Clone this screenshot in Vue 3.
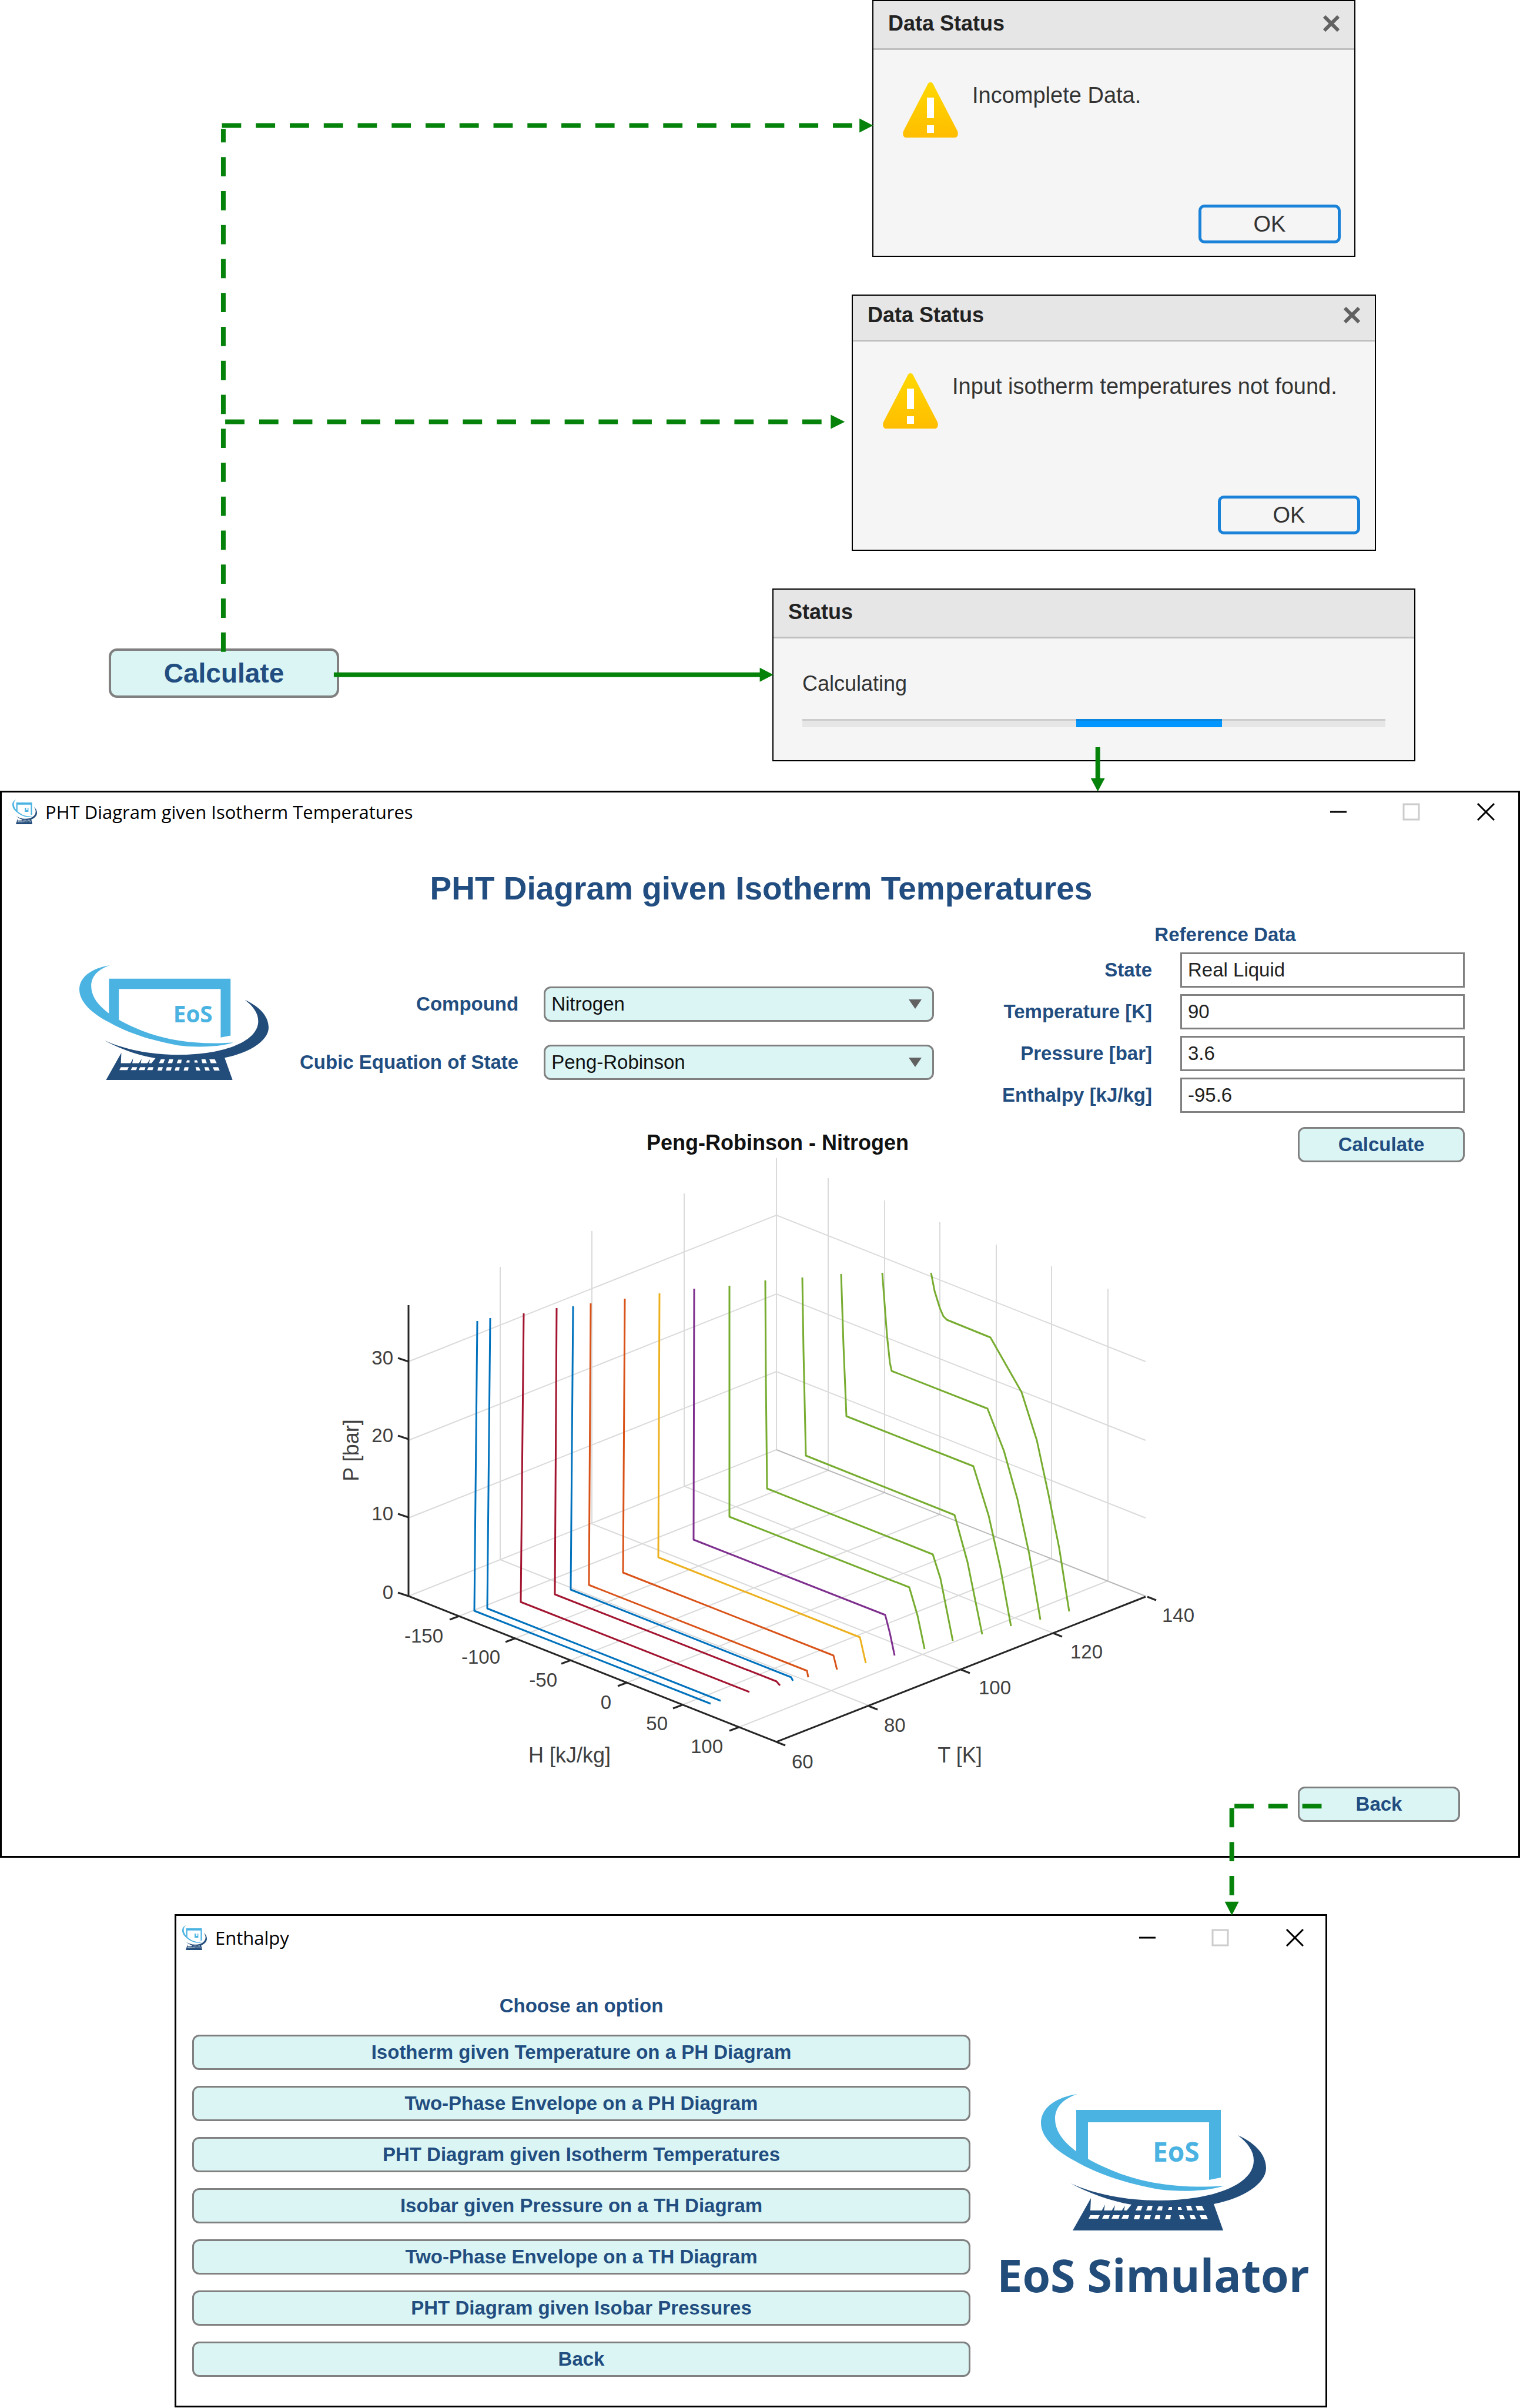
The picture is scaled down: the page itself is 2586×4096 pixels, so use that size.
<script setup>
import { ref } from 'vue'

const compound = ref('Nitrogen')
const equation = ref('Peng-Robinson')

const reference = ref([
  { id: 'state', label: 'State', value: 'Real Liquid' },
  { id: 'temperature', label: 'Temperature [K]', value: '90' },
  { id: 'pressure', label: 'Pressure [bar]', value: '3.6' },
  { id: 'enthalpy', label: 'Enthalpy [kJ/kg]', value: '-95.6' },
])

const options = [
  'Isotherm given Temperature on a PH Diagram',
  'Two-Phase Envelope on a PH Diagram',
  'PHT Diagram given Isotherm Temperatures',
  'Isobar given Pressure on a TH Diagram',
  'Two-Phase Envelope on a TH Diagram',
  'PHT Diagram given Isobar Pressures',
  'Back',
]

// Back corner of the box is (762, 508); walls rise 496 units above the floor.
const pressureGrid = [109, 243, 375].map((y) => `136,${y + 249} 762,${y} 1390,${y + 249}`)
const enthalpyGrid = [
  [222, 791, 850, 543],
  [317, 829, 946, 581],
  [412, 866, 1040, 618],
  [508, 904, 1136, 656],
  [602, 942, 1230, 693],
  [698, 980, 1326, 731],
].map(([x, y, bx, by]) => `${x},${y} ${bx},${by} ${bx},${by - 497}`)
const temperatureGrid = [
  [919, 943, 292, 695],
  [1076, 882, 448, 634],
  [1233, 820, 605, 570],
].map(([x, y, bx, by]) => `${x},${y} ${bx},${by} ${bx},${by - 498}`)

const pTicks = [
  { t: '30', y: 358 },
  { t: '20', y: 490 },
  { t: '10', y: 623 },
  { t: '0', y: 757 },
]
const hTicks = [
  { t: '-150', x: 222, y: 791, lx: 193, ly: 836 },
  { t: '-100', x: 317, y: 829, lx: 290, ly: 872 },
  { t: '-50', x: 412, y: 866, lx: 387, ly: 911 },
  { t: '0', x: 508, y: 904, lx: 479, ly: 949 },
  { t: '50', x: 602, y: 942, lx: 575, ly: 985 },
  { t: '100', x: 698, y: 980, lx: 669, ly: 1024 },
]
const tTicks = [
  { t: '60', x: 762, y: 1005, lx: 788, ly: 1050 },
  { t: '80', x: 919, y: 944, lx: 945, ly: 988 },
  { t: '100', x: 1076, y: 882, lx: 1106, ly: 924 },
  { t: '120', x: 1233, y: 820, lx: 1262, ly: 863 },
  { t: '140', x: 1393, y: 758, lx: 1418, ly: 801 },
]

const blue = '#0072bd'
const red = '#a2142f'
const orange = '#d95319'
const green = '#77ac30'
const isotherms = [
  { c: blue, p: '253,289 248,782 650,940' },
  { c: blue, p: '275,284 270,778 667,935' },
  { c: red, p: '332,276 327,767 716,920' },
  { c: red, p: '388,267 385,754 762,902 768,909' },
  { c: blue, p: '416,264 412,746 787,895 790,901' },
  { c: orange, p: '446,259 443,738 814,884 816,895' },
  { c: orange, p: '504,251 501,717 859,858 865,882' },
  { c: '#edb120', p: '563,242 561,691 904,827 914,871' },
  { c: '#7e2f8e', p: '622,234 621,661 947,789 955,820 963,858' },
  { c: green, p: '682,229 682,622 988,742 1002,790 1014,847' },
  { c: green, p: '743,220 744,390 746,574 1028,686 1041,727 1062,833' },
  { c: green, p: '806,215 808,340 812,518 1065,619 1087,699 1112,822' },
  { c: green, p: '872,209 876,330 881,451 1097,536 1123,620 1143,709 1161,808' },
  { c: green, p: '942,207 950,313 955,360 958,374 1121,438 1149,510 1172,592 1192,685 1211,797' },
  { c: green, p: '1025,207 1031,238 1040,267 1046,281 1052,287 1126,317 1179,410 1205,492 1225,585 1243,675 1260,783' },
]
</script>

<template>
  <main class="page">
    <svg class="defs" aria-hidden="true">
      <defs>
        <linearGradient id="amber" x1="0" y1="0" x2="0" y2="1">
          <stop offset="0" stop-color="#ffd800" />
          <stop offset="1" stop-color="#ffbd00" />
        </linearGradient>
        <symbol id="warning" viewBox="0 0 94 94" overflow="visible">
          <path d="M47 0C50 0 51 2 52 4L93 83C95 89 93 94 88 94H6C1 94-1 89 1 83L42 4C43 2 44 0 47 0Z" fill="url(#amber)" />
          <path d="M41 26H53V61H41ZM41 73H53V86H41Z" fill="#fff" />
        </symbol>
        <symbol id="cross" viewBox="0 0 28 28" overflow="visible">
          <path d="M2 2L26 26M26 2L2 26" stroke="#616161" stroke-width="6" />
        </symbol>
        <symbol id="mark" viewBox="0 0 383 232" preserveAspectRatio="none">
          <path d="M62 0C28 5 0 22 0 49C0 75 28 99 60 115C100 138 150 153 200 162C240 167 285 165 312 156C230 162 165 150 112 126C66 106 24 78 24 42C24 22 38 8 62 0Z" fill="#4bb3e2" />
          <path d="M60 100V27H306V142L286 146V48H80V114Z" fill="#4bb3e2" />
          <path d="M335 70C366 84 383 104 383 126C383 152 345 177 294 187L310 232H54L85 177L84 198H146L154 188C118 182 80 168 51 152C90 170 145 181 200 181C290 181 362 155 362 113C362 97 352 83 335 70Z" fill="#224c7a" />
          <path d="M103 199L109 188L107 199ZM120 199L126 189L124 199ZM137 199L143 190L141 199Z" fill="#224c7a" />
          <path
            d="M161 198L165 190H173L170 198ZM179 198L182 190H190L188 198ZM197 198L200 191H207L206 198ZM216 197L218 192H223L223 197ZM233 197V192H238L240 197ZM249 198L247 190H255L258 198ZM266 198L263 190H274L278 198ZM81 212L84 206H100L97 212ZM104 212L107 206H117L115 212ZM120 212L123 206H134L132 212ZM137 212L140 206H150L148 212ZM158 213L160 206H169L167 213ZM175 213L177 206H187L185 213ZM193 213L195 206H203L202 213ZM211 213L213 206H221L220 213ZM237 213L235 206H242L245 213ZM255 213L253 206H261L264 213ZM273 213L270 206H281L284 213Z"
            fill="#fff"
          />
        </symbol>
        <symbol id="win-controls" viewBox="0 0 280 30" overflow="visible">
          <path d="M0 15H28" stroke="#000" stroke-width="3" />
          <rect x="125" y="2" width="26" height="26" fill="none" stroke="#ccc" stroke-width="3" />
          <path d="M251 1L279 29M279 1L251 29" stroke="#000" stroke-width="3" />
        </symbol>
      </defs>
    </svg>

    <section class="branches">
      <button class="btn start" type="button">Calculate</button>
      <div class="dialogs">
        <section class="dialog incomplete">
          <header>
            <h2>Data Status</h2>
            <svg class="cross"><use href="#cross" /></svg>
          </header>
          <div class="dialog-body">
            <div class="message">
              <svg class="warning"><use href="#warning" /></svg>
              <p>Incomplete Data.</p>
            </div>
            <button class="ok" type="button">OK</button>
          </div>
        </section>

        <section class="dialog missing">
          <header>
            <h2>Data Status</h2>
            <svg class="cross"><use href="#cross" /></svg>
          </header>
          <div class="dialog-body">
            <div class="message">
              <svg class="warning"><use href="#warning" /></svg>
              <p>Input isotherm temperatures not found.</p>
            </div>
            <button class="ok" type="button">OK</button>
          </div>
        </section>

        <section class="dialog status">
          <header><h2>Status</h2></header>
          <div class="status-body">
            <p>Calculating</p>
            <div class="track"><div class="bar"></div></div>
          </div>
        </section>
      </div>
    </section>

    <section class="window">
      <header class="titlebar">
        <svg class="app-icon" viewBox="0 0 383 232" preserveAspectRatio="none">
          <use href="#mark" width="383" height="232" />
          <path d="M192 78H214V100H236V78H250V116H192Z" fill="#4bb3e2" />
        </svg>
        <span>PHT Diagram given Isotherm Temperatures</span>
        <svg class="controls"><use href="#win-controls" /></svg>
      </header>

      <div class="content">
        <h1>PHT Diagram given Isotherm Temperatures</h1>
        <div class="inputs">
          <svg class="logo" viewBox="0 0 383 232">
            <use href="#mark" width="383" height="232" />
            <text x="190" y="115">EoS</text>
          </svg>

          <form class="choices">
            <label for="compound">Compound</label>
            <span class="select">
              <select id="compound" v-model="compound"><option>Nitrogen</option></select>
              <svg viewBox="0 0 22 16"><path d="M0 0H22L11 16Z" /></svg>
            </span>
            <label for="equation">Cubic Equation of State</label>
            <span class="select">
              <select id="equation" v-model="equation"><option>Peng-Robinson</option></select>
              <svg viewBox="0 0 22 16"><path d="M0 0H22L11 16Z" /></svg>
            </span>
          </form>

          <form class="reference">
            <h3>Reference Data</h3>
            <div class="fields">
              <template v-for="f in reference" :key="f.id">
                <label :for="f.id">{{ f.label }}</label>
                <input :id="f.id" v-model="f.value" type="text" />
              </template>
            </div>
            <button class="btn calc" type="button">Calculate</button>
          </form>
        </div>

        <svg class="chart" viewBox="-17 -40 1500 1100">
          <g fill="none" stroke="#dadada" stroke-width="2">
            <polyline v-for="g in pressureGrid" :key="g" :points="g" />
            <polyline v-for="g in enthalpyGrid" :key="g" :points="g" />
            <polyline v-for="g in temperatureGrid" :key="g" :points="g" />
            <polyline points="136,757 762,508 762,12" />
            <polyline points="762,508 1390,757" stroke="#b8b8b8" />
          </g>
          <g fill="none" stroke="#262626" stroke-width="3">
            <polyline points="136,262 136,757 762,1005 1390,758" />
            <path v-for="k in pTicks" :key="k.t" :d="`M${136} ${k.y}l-18 -6`" />
            <path v-for="k in hTicks" :key="k.t" :d="`M${k.x} ${k.y}l-16 6`" />
            <path v-for="k in tTicks" :key="k.t" :d="`M${k.x} ${k.y}l15 6`" />
          </g>
          <g fill="none" stroke-width="3" stroke-linejoin="round">
            <polyline v-for="s in isotherms" :key="s.p" :points="s.p" :stroke="s.c" />
          </g>
          <g class="ticks">
            <text v-for="k in pTicks" :key="k.t" x="110" :y="k.y + 5" text-anchor="end">{{ k.t }}</text>
            <text v-for="k in hTicks" :key="k.t" :x="k.lx + 2" :y="k.ly" text-anchor="end">{{ k.t }}</text>
            <text v-for="k in tTicks" :key="k.t" :x="k.lx" :y="k.ly">{{ k.t }}</text>
          </g>
          <g class="axis-names">
            <text x="410" y="1040" text-anchor="middle">H [kJ/kg]</text>
            <text x="1074" y="1040" text-anchor="middle">T [K]</text>
            <text transform="translate(51 509) rotate(-90)" text-anchor="middle">P [bar]</text>
          </g>
          <text class="chart-title" x="764" y="-2" text-anchor="middle">Peng-Robinson - Nitrogen</text>
        </svg>

        <button class="btn back" type="button">Back</button>
      </div>
    </section>

    <section class="window menu">
      <header class="titlebar">
        <svg class="app-icon" viewBox="0 0 383 232" preserveAspectRatio="none">
          <use href="#mark" width="383" height="232" />
          <path d="M192 78H214V100H236V78H250V116H192Z" fill="#4bb3e2" />
        </svg>
        <span>Enthalpy</span>
        <svg class="controls"><use href="#win-controls" /></svg>
      </header>
      <div class="menu-body">
        <div class="menu-list">
          <h3>Choose an option</h3>
          <div class="menu-buttons">
            <button v-for="o in options" :key="o" class="btn" type="button">{{ o }}</button>
          </div>
        </div>
        <div class="brand">
          <svg class="logo" viewBox="0 0 383 232">
            <use href="#mark" width="383" height="232" />
            <text x="190" y="115">EoS</text>
          </svg>
          <p>EoS Simulator</p>
        </div>
      </div>
    </section>

    <svg class="arrows" viewBox="0 0 3233 5120" aria-hidden="true">
      <g fill="none" stroke="#05820a" stroke-width="10">
        <path d="M475 1386V274" stroke-dasharray="41 31.2" />
        <path d="M472 267H1829" stroke-dasharray="41 31.2" />
        <path d="M479 897H1767" stroke-dasharray="41 31.2" />
        <path d="M2811 3841H2620" stroke-dasharray="41 31.2" />
        <path d="M2620 3845V4044" stroke-dasharray="41 31.2" />
        <path d="M710 1435H1618M2335 1589V1657" />
      </g>
      <path d="M1828 252V282L1857 267ZM1767 882V912L1797 897ZM1616 1420V1450L1645 1435ZM2320 1655H2350L2335 1683ZM2605 4044H2635L2620 4073Z" fill="#05820a" />
    </svg>
  </main>
</template>

<style>
body {
  margin: 0;
  background: #fff;
}
</style>

<style scoped>
.page {
  position: relative;
  font-family: 'Liberation Sans', Arial, sans-serif;
  color: #1a1a1a;
}
.page * {
  box-sizing: border-box;
}
.defs {
  position: absolute;
  width: 0;
  height: 0;
}
h1,
h2,
h3,
p {
  margin: 0;
}
.arrows {
  position: absolute;
  top: 0;
  left: 0;
  width: 100%;
  pointer-events: none;
}

.btn {
  height: 60px;
  padding: 0;
  border: 3px solid #808080;
  border-radius: 12px;
  background: #dbf5f4;
  color: #214d80;
  font: bold 33px/54px 'Liberation Sans', Arial, sans-serif;
}

/* Entry button and the dialogs it leads to */
.branches {
  display: grid;
  grid-template-columns: 185fr 392px 737fr 1162px 110fr;
  align-items: end;
  padding-bottom: 50px;
}
.start {
  grid-column: 2;
  height: 84px;
  margin-bottom: 108px;
  border-width: 4px;
  border-radius: 14px;
  font-size: 46px;
  line-height: 70px;
}
.dialogs {
  grid-column: 4;
  display: flex;
  flex-direction: column;
  align-items: center;
  gap: 64px;
}
.dialog {
  border: 2px solid #000;
  background: #f5f5f5;
}
.incomplete {
  width: 822px;
}
.missing {
  width: 892px;
}
.status {
  align-self: flex-start;
  width: 1094px;
}
.dialog header {
  display: flex;
  align-items: center;
  justify-content: space-between;
  height: 83px;
  padding: 0 25px 5px;
  border-bottom: 3px solid #c0c0c0;
  background: #e6e6e6;
}
.missing header {
  height: 78px;
  padding-bottom: 9px;
}
.dialog h2 {
  font-size: 36px;
  line-height: 44px;
  color: #222;
}
.cross {
  width: 28px;
  height: 28px;
}
.dialog-body {
  display: flex;
  flex-direction: column;
  padding: 54px 25px 26px 51px;
}
.incomplete .dialog-body {
  padding: 55px 23px 21px 50px;
}
.message {
  display: flex;
  gap: 24px;
  font-size: 38px;
  line-height: 44px;
  color: #333;
}
.warning {
  width: 94px;
  height: 94px;
}
.ok {
  align-self: flex-end;
  width: 242px;
  height: 66px;
  margin-top: 114px;
  padding: 0;
  border: 5px solid #1a82d9;
  border-radius: 10px;
  background: #f5f5f5;
  color: #333;
  font: 38px/54px 'Liberation Sans', Arial, sans-serif;
}
.status-body {
  padding: 55px 49px 56px;
  font-size: 36px;
  line-height: 44px;
  color: #333;
}
.track {
  height: 14px;
  margin-top: 38px;
  border-top: 3px solid #ccc;
  background: #e6e6e6;
}
.bar {
  width: 25%;
  height: 14px;
  margin-top: -3px;
  margin-left: 47%;
  border-top: 3px solid #0a86de;
  background: #0095ff;
}

/* Application windows */
.window {
  border: 3px solid #000;
  background: #fff;
}
.titlebar {
  display: flex;
  align-items: center;
  height: 66px;
  padding: 0 40px 0 18px;
  color: #000;
  font: 31px/44px 'Open Sans', 'Noto Sans', sans-serif;
}
.app-icon {
  width: 42px;
  height: 42px;
  margin-right: 14px;
}
.controls {
  width: 280px;
  height: 30px;
  margin-left: auto;
}
.content {
  display: flex;
  flex-direction: column;
  padding: 65px 91px 58px 132px;
}
h1 {
  margin: 0 91px 0 54px;
  color: #214d80;
  font-size: 55px;
  line-height: 64px;
  text-align: center;
}
h3,
label {
  color: #214d80;
  font-size: 33px;
  line-height: 40px;
  font-weight: bold;
  white-space: nowrap;
}
.inputs {
  display: grid;
  grid-template-columns: 322px 53fr 1079px 112fr 791px;
  margin-top: 27px;
}
.logo {
  width: 100%;
}
.logo text {
  fill: #4bb3e2;
  font: bold 46px 'Open Sans', 'Noto Sans', sans-serif;
}
.inputs .logo {
  margin-top: 72px;
}
.choices {
  grid-column: 3;
  display: grid;
  grid-template-columns: 1fr 664px;
  column-gap: 43px;
  row-gap: 39px;
  align-content: start;
  align-items: center;
  margin-top: 108px;
}
.choices label,
.fields label {
  text-align: right;
}
.select {
  position: relative;
  display: block;
}
.select select {
  display: block;
  width: 100%;
  height: 60px;
  padding: 0 10px;
  border: 3px solid #808080;
  border-radius: 12px;
  background: #dbf5f4;
  color: #111;
  font: 33px/40px 'Liberation Sans', Arial, sans-serif;
  appearance: none;
}
.select svg {
  position: absolute;
  top: 22px;
  right: 21px;
  width: 22px;
  height: 16px;
  fill: #616161;
  pointer-events: none;
}
.reference {
  grid-column: 5;
  display: flex;
  flex-direction: column;
}
.reference h3 {
  padding-right: 24px;
  text-align: center;
}
.fields {
  display: grid;
  grid-template-columns: 1fr 484px;
  gap: 11px 48px;
  align-items: center;
  margin-top: 10px;
}
.fields input {
  width: 100%;
  height: 60px;
  padding: 0 10px;
  border: 3px solid #808080;
  background: #fff;
  color: #222;
  font: 33px/40px 'Liberation Sans', Arial, sans-serif;
}
.calc {
  align-self: flex-end;
  width: 284px;
  margin-top: 24px;
}
.chart {
  align-self: center;
  width: 1500px;
  margin: -59px 44px 0 0;
}
.chart text {
  font-size: 33px;
  fill: #404040;
}
.chart .axis-names text {
  font-size: 36px;
}
.chart .chart-title {
  font-size: 36px;
  font-weight: bold;
  fill: #111;
}
.back {
  align-self: flex-end;
  width: 276px;
  margin: 21px 8px 0 0;
}

.menu {
  margin: 96px 328px 0 297px;
}
.menu .titlebar {
  height: 74px;
  padding: 0 37px 0 10px;
}
.menu-body {
  display: grid;
  grid-template-columns: 1fr 528px;
  gap: 47px;
  padding: 59px 29px 49px 27px;
}
.menu-list h3 {
  text-align: center;
}
.menu-buttons {
  display: flex;
  flex-direction: column;
  gap: 27px;
  margin-top: 29px;
}
.brand {
  display: flex;
  flex-direction: column;
  align-items: center;
  padding-top: 170px;
}
.brand .logo {
  width: 383px;
}
.brand p {
  margin-top: 24px;
  color: #224c7a;
  font: bold 77px/104px 'Open Sans', 'Noto Sans', sans-serif;
  white-space: nowrap;
}
</style>
